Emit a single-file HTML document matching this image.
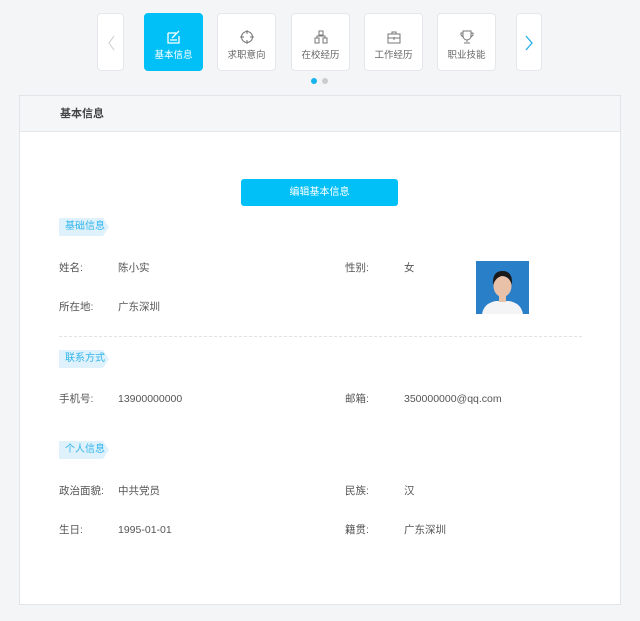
<!DOCTYPE html>
<html><head><meta charset="utf-8"><style>
*{margin:0;padding:0;box-sizing:border-box}
body{width:640px;height:621px;background:#f4f5f7;font-family:"Liberation Sans","Noto Sans CJK SC",sans-serif;font-size:11px;color:#555;position:relative;overflow:hidden}
.card{position:absolute;top:13px;height:58px;background:#fff;border:1px solid #e6e7ea;border-radius:4px;text-align:center;font-size:9.5px;color:#666}
.card svg{display:block;margin:16px auto 3px}
.act{background:#00c0f7;border-color:#00c0f7;color:#fff}
.dot{position:absolute;top:78px;width:6px;height:6px;border-radius:3px}
.panel{position:absolute;left:19px;top:95px;width:602px;height:510px;background:#fff;border:1px solid #e3e4e7}
.hd{height:36px;background:#f5f6f8;border-bottom:1px solid #e6e7ea;padding-left:40px;line-height:36px;font-weight:bold;color:#444;font-size:11px}
.btn{position:absolute;left:221px;top:83px;width:157px;height:27px;background:#00c0f7;border-radius:3px;color:#fff;text-align:center;line-height:27px;font-size:10px}
.tag{position:absolute;left:39px;height:18px;line-height:18px;background:#dff1fb;color:#31b5ec;font-size:10px;padding-left:6px;width:50px;clip-path:polygon(0 0,44px 0,50px 9px,44px 18px,0 18px)}
.t{position:absolute;font-size:10.5px;color:#555;line-height:14px;height:14px}
.photo{position:absolute;left:456px;top:165px;width:53px;height:53px;background:#2a7fc9;overflow:hidden}
.line{position:absolute;left:39px;top:240px;width:523px;border-top:1px dashed #e3e3e3}
</style></head><body>
<div class="card" style="left:97px;width:27px"><svg width="12" height="58" style="margin:0 auto" viewBox="0 0 12 58"><path d="M9 22 L4 29 L9 36" stroke="#ccc" fill="none"/></svg></div>
<div class="card act" style="left:144px;width:59px"><svg width="14" height="14" viewBox="0 0 14 14"><path d="M1 3h8M1 3v10h11V6M3 10h7M5 8l7-7" stroke="#fff" stroke-width="1.3" fill="none"/></svg>基本信息</div>
<div class="card" style="left:217px;width:59px"><svg width="14" height="14" viewBox="0 0 14 14"><circle cx="7" cy="7" r="5.5" stroke="#777" fill="none"/><path d="M7 0v4M7 10v4M0 7h4M10 7h4" stroke="#777"/></svg>求职意向</div>
<div class="card" style="left:291px;width:59px"><svg width="14" height="14" viewBox="0 0 14 14"><path d="M5 1h4v4H5zM1 8h4v5H1zM9 8h4v5H9zM3 8V6h8v2M7 5v1" stroke="#777" fill="none"/></svg>在校经历</div>
<div class="card" style="left:364px;width:59px"><svg width="14" height="14" viewBox="0 0 14 14"><path d="M1 4h12v9H1zM5 4V2h4v2M1 8h12M7 7v3" stroke="#777" fill="none"/></svg>工作经历</div>
<div class="card" style="left:437px;width:59px"><svg width="14" height="14" viewBox="0 0 14 14"><path d="M3 1h8v5a4 4 0 0 1-8 0zM3 3H1v2l2 2M11 3h2v2l-2 2M7 10v2M4 13h6" stroke="#777" fill="none"/></svg>职业技能</div>
<div class="card" style="left:516px;width:26px"><svg width="12" height="58" style="margin:0 auto" viewBox="0 0 12 58"><path d="M3 22 L9 29 L3 36" stroke="#21b0ec" stroke-width="1.3" fill="none"/></svg></div>
<div class="dot" style="left:311px;background:#17b3ec"></div>
<div class="dot" style="left:322px;background:#ccc"></div>
<div class="panel">
<div class="hd">基本信息</div>
<div class="btn">编辑基本信息</div>
<div class="tag" style="top:122px">基础信息</div>
<div class="t" style="left:39px;top:165px">姓名:</div><div class="t" style="left:98px;top:165px">陈小实</div>
<div class="t" style="left:325px;top:165px">性别:</div><div class="t" style="left:384px;top:165px">女</div>
<div class="photo"><svg width="53" height="53" viewBox="0 0 53 53"><path d="M6 53 Q8 42 20 40 L33 40 Q45 42 47 53Z" fill="#f4f4f6"/><ellipse cx="26.5" cy="25" rx="9" ry="11" fill="#e9c0a8"/><path d="M17 24 Q16 10 26.5 10 Q37 10 36 24 Q33 15 26 15 Q20 16 17 24Z" fill="#1a1a1a"/><rect x="23" y="33" width="7" height="8" fill="#e9c0a8"/></svg></div>
<div class="t" style="left:39px;top:204px">所在地:</div><div class="t" style="left:98px;top:204px">广东深圳</div>
<div class="line"></div>
<div class="tag" style="top:254px">联系方式</div>
<div class="t" style="left:39px;top:296px">手机号:</div><div class="t" style="left:98px;top:296px">13900000000</div>
<div class="t" style="left:325px;top:296px">邮箱:</div><div class="t" style="left:384px;top:296px">350000000@qq.com</div>
<div class="tag" style="top:345px">个人信息</div>
<div class="t" style="left:39px;top:388px">政治面貌:</div><div class="t" style="left:98px;top:388px">中共党员</div>
<div class="t" style="left:325px;top:388px">民族:</div><div class="t" style="left:384px;top:388px">汉</div>
<div class="t" style="left:39px;top:427px">生日:</div><div class="t" style="left:98px;top:427px">1995-01-01</div>
<div class="t" style="left:325px;top:427px">籍贯:</div><div class="t" style="left:384px;top:427px">广东深圳</div>
</div>
</body></html>
